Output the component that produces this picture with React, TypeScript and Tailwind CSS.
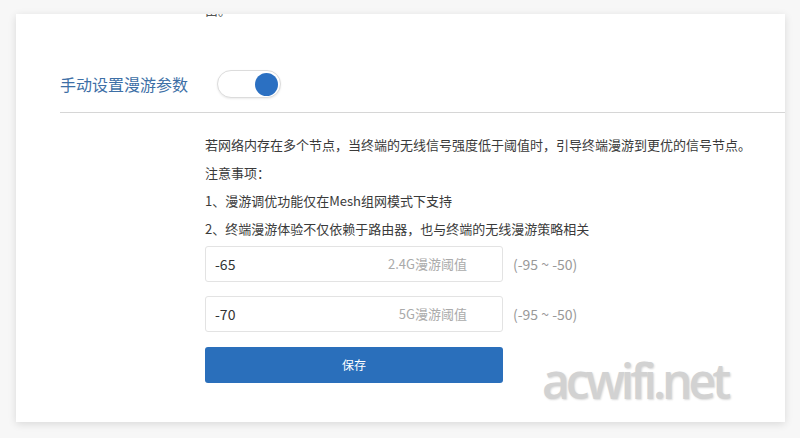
import React from 'react';

const FONT = { fontFamily: '"Microsoft YaHei", "Noto Sans CJK SC", "Open Sans", sans-serif' };

const ThresholdInput = ({ value, hint }: { value: string; hint: string }) => (
  <div className="flex items-center">
    <div className="flex h-[36px] w-[298px] items-center justify-between rounded-[3px] border border-[#e3e3e3] bg-white pl-[9px] pr-[35px]">
      <span className="text-[14px] text-[#333]">{value}</span>
      <span className="text-[13px] text-[#aaa]">{hint}</span>
    </div>
    <span className="ml-[10px] text-[14px] text-[#999]">(-95 ~ -50)</span>
  </div>
);

const App = () => {
  return (
    <div className="h-[438px] w-[800px] overflow-hidden bg-[#f7f7f7] pl-[16px] pr-[15px] pt-[14px]" style={FONT}>
      <div className="relative h-[408px] overflow-hidden bg-white shadow-[0_2px_8px_rgba(0,0,0,0.12)]">
        {/* tail of the previous paragraph, scrolled off */}
        <div className="-mt-[12px] pl-[189px] text-[13px] leading-[16px] text-[#555]">由。</div>

        {/* switch row */}
        <div className="ml-[44px] mt-[52px] flex items-center border-b border-[#d6d6d6] pb-[14px]">
          <span className="w-[157px] text-[16px] text-[#3d6fa6]">手动设置漫游参数</span>
          <div className="flex h-[28px] w-[64px] items-center justify-end rounded-full border border-[#dcdcdc] bg-white pr-[2px] shadow-[0_1px_2px_rgba(0,0,0,0.08)]">
            <div className="h-[23px] w-[23px] rounded-full bg-[#2b70c2]" />
          </div>
        </div>

        {/* settings */}
        <div className="pl-[189px] pt-[18px] text-[13px] text-[#3a3a3a]">
          <p className="leading-[28px]">若网络内存在多个节点，当终端的无线信号强度低于阈值时，引导终端漫游到更优的信号节点。</p>
          <p className="leading-[28px]">注意事项：</p>
          <p className="leading-[28px]">1、漫游调优功能仅在Mesh组网模式下支持</p>
          <p className="leading-[28px]">2、终端漫游体验不仅依赖于路由器，也与终端的无线漫游策略相关</p>

          <div className="mt-[3px] flex flex-col gap-[14px]">
            <ThresholdInput value="-65" hint="2.4G漫游阈值" />
            <ThresholdInput value="-70" hint="5G漫游阈值" />
          </div>

          <button className="mt-[15px] flex h-[36px] w-[298px] items-center justify-center rounded-[3px] bg-[#2a6fbb] text-[12px] text-white">
            保存
          </button>
        </div>

        {/* watermark */}
        <div
          className="absolute left-[526px] top-[331px] text-[48px] font-semibold tracking-[-4px] text-[#d2d2d2] [text-shadow:1px_1px_2px_rgba(0,0,0,0.15)]"
          style={{ fontFamily: '"Open Sans", sans-serif' }}
        >
          acwifi.net
        </div>
      </div>
    </div>
  );
};

export default App;
